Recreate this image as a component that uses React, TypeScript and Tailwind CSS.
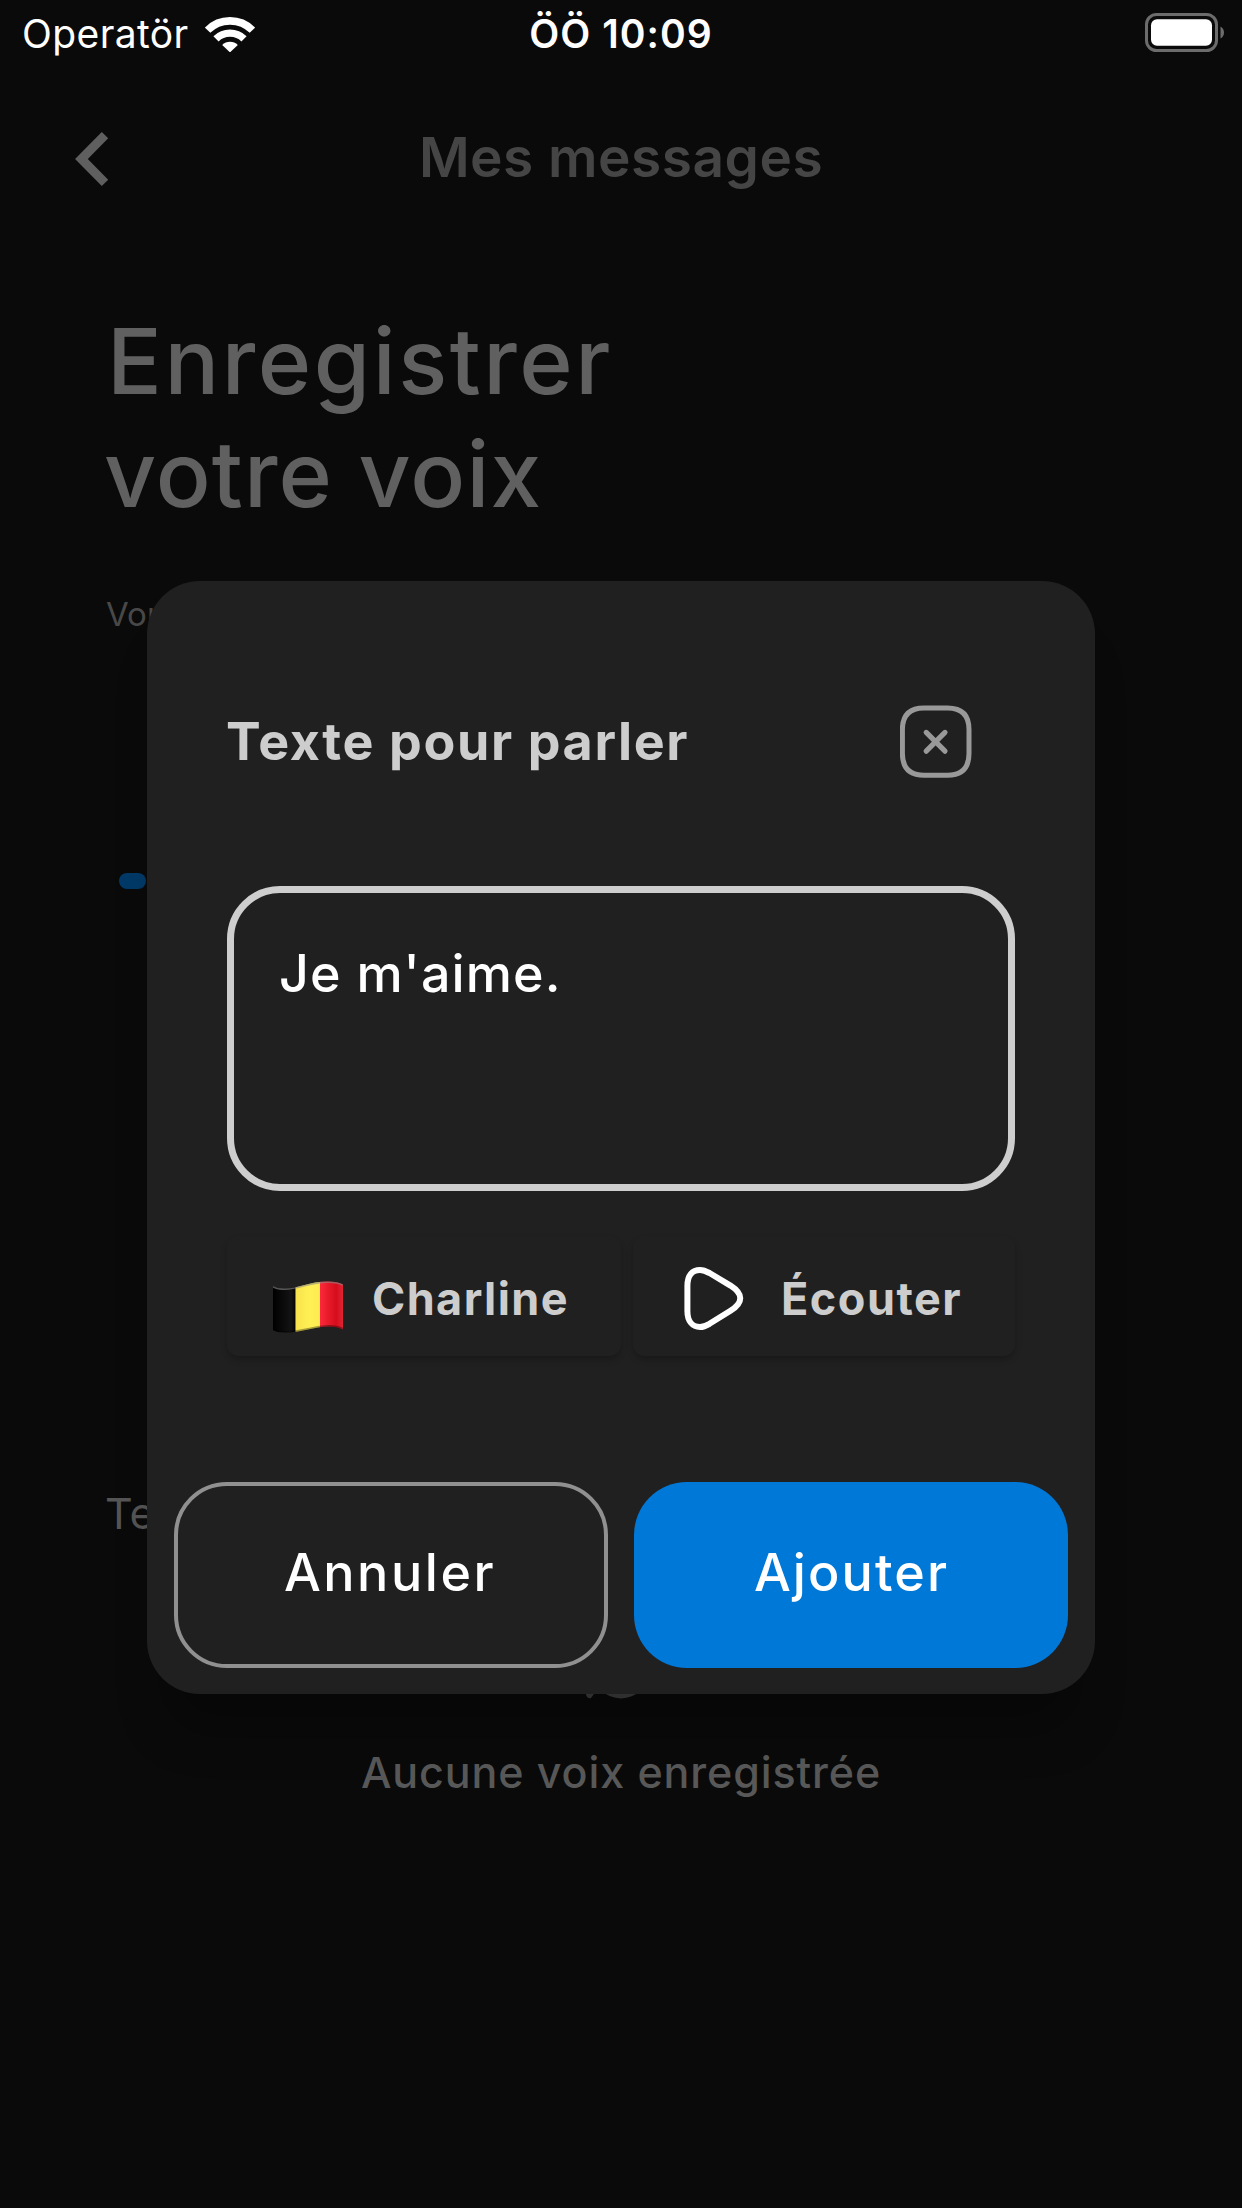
function WifiIcon() {
  return (
    <svg className="h-9 w-[50px]" viewBox="0 0 50 36" fill="none">
      <path d="M2.6 14.2 A31.5 31.5 0 0 1 47.4 14.2" stroke="#fff" strokeWidth="7.6" />
      <path d="M11 22.8 A20 20 0 0 1 39 22.8" stroke="#fff" strokeWidth="7.4" />
      <path d="M17.2 29 A11 11 0 0 1 32.8 29 L25 36.4 Z" fill="#fff" />
    </svg>
  );
}

function BatteryIcon() {
  return (
    <svg className="h-[39px] w-[79px]" viewBox="0 0 79 39" fill="none">
      <rect x="1.5" y="1.5" width="70" height="36" rx="10" stroke="#6c6c6c" strokeWidth="3" />
      <rect x="6" y="6.2" width="61" height="26.5" rx="6" fill="#fff" />
      <path d="M75.5 13.5 Q79 15.5 79 19.5 Q79 23.5 75.5 25.5 Z" fill="#6c6c6c" />
    </svg>
  );
}

function ChevronLeft() {
  return (
    <svg className="h-[54px] w-[34px]" viewBox="0 0 34 54" fill="none">
      <path d="M30 3.2 L6.4 27 L30 50.8" stroke="#5f5f5f" strokeWidth="9" />
    </svg>
  );
}

function SpeechBubble() {
  return (
    <svg className="h-20 w-[120px]" viewBox="0 0 120 80" fill="#414141">
      <circle cx="60" cy="50.5" r="28" />
      <path d="M22 66 L36 70 L30 78 Q27 79 25.5 76 Z" />
    </svg>
  );
}

function CloseIcon() {
  return (
    <svg className="h-[73px] w-[72px]" viewBox="0 0 72 73" fill="none" stroke="#999">
      <path
        d="M24 2.9 H47.6 C62 2.9 69 10 69 24.5 V48.5 C69 63 62 70.2 47.6 70.2 H24 C9.4 70.2 2.4 63 2.4 48.5 V24.5 C2.4 10 9.4 2.9 24 2.9 Z"
        strokeWidth="5"
      />
      <path d="M26.2 27.4 L45 46.2 M45 27.4 L26.2 46.2" strokeWidth="5.2" strokeLinecap="round" />
    </svg>
  );
}

function BelgianFlag() {
  return (
    <svg className="mt-[22px] h-[52px] w-[70px]" viewBox="0 0 70 52">
      <defs>
        <clipPath id="wave">
          <path d="M0 5 Q4 7.5 12 7.5 C26 7.5 36 .5 55 .5 Q65 .5 70 3.5 V48.5 Q64 45.5 56 45.5 C40 45.5 30 51.5 13 51.5 Q3 51.5 0 49 Z" />
        </clipPath>
        <linearGradient id="black" x1="0" x2="1">
          <stop offset="0" stopColor="#000" />
          <stop offset=".8" stopColor="#131313" />
          <stop offset="1" stopColor="#040404" />
        </linearGradient>
        <linearGradient id="yellow" x1="0" x2="1">
          <stop offset="0" stopColor="#f8e24c" />
          <stop offset=".6" stopColor="#fff055" />
          <stop offset="1" stopColor="#fdea50" />
        </linearGradient>
        <linearGradient id="red" x1="0" x2="1">
          <stop offset="0" stopColor="#fb2a3a" />
          <stop offset=".7" stopColor="#d60c1c" />
          <stop offset="1" stopColor="#e02434" />
        </linearGradient>
      </defs>
      <g clipPath="url(#wave)">
        <rect width="22.5" height="52" fill="url(#black)" />
        <rect x="22.5" width="24.5" height="52" fill="url(#yellow)" />
        <rect x="47" width="23" height="52" fill="url(#red)" />
        <path d="M0 5 Q4 7.5 12 7.5 C26 7.5 36 .5 55 .5 Q65 .5 70 3.5" fill="none" stroke="#888" strokeOpacity=".6" strokeWidth="3" />
        <path d="M70 48.5 Q64 45.5 56 45.5 C40 45.5 30 51.5 13 51.5 Q3 51.5 0 49" fill="none" stroke="#000" strokeOpacity=".35" strokeWidth="3" />
      </g>
    </svg>
  );
}

function PlayIcon() {
  return (
    <svg className="mt-1 h-[63px] w-[60px]" viewBox="0 0 60 63" fill="none" stroke="#fff" strokeWidth="6" strokeLinejoin="round">
      <path d="M3.4 19 C3.4 8 8.4 3 16 3 Q20 3 25.5 6 L46.5 18.6 C59.5 27 59.5 35.5 46.5 43.8 L25.5 56.8 Q20 60 16 60 C8.4 60 3.4 54 3.4 44 Z" />
    </svg>
  );
}

function StatusBar() {
  return (
    <div className="grid h-[68px] grid-cols-3 items-center text-[39px] leading-[48px] text-white">
      <div className="flex items-center gap-[16px] pl-[22px]">
        <span className="tracking-[0.4px]">Operatör</span>
        <WifiIcon />
      </div>
      <span className="text-center font-semibold tracking-[1.05px]">ÖÖ 10:09</span>
      <div className="flex justify-end pr-[18px] pb-[4px]">
        <BatteryIcon />
      </div>
    </div>
  );
}

function RecordScreen() {
  return (
    <div className="flex flex-col">
      <StatusBar />
      <header className="grid h-[178px] grid-cols-[1fr_auto_1fr] items-center">
        <button className="justify-self-start pt-1 pl-[75px]">
          <ChevronLeft />
        </button>
        <h2 className="text-[55px] leading-[64px] font-semibold tracking-[0.47px] text-[#454545]">Mes messages</h2>
      </header>
      <h1 className="mt-[59px] flex flex-col pl-[104px] text-[91px] leading-[113px] font-medium text-[#606060]">
        <span className="ml-[3px] tracking-[2.55px]">Enregistrer</span>
        <span className="tracking-[1.15px]">votre voix</span>
      </h1>
      <p className="mt-[63px] pl-[106px] text-[33px] leading-[40px] text-[#484848]">Vous</p>
      <div className="mt-[239px] ml-[119px] h-4 w-[27px] rounded-full bg-[#003a68]" />
      <p className="mt-[598px] pl-[105px] text-[43px] leading-[52px] text-[#555]">Textes</p>
      <div className="mt-[81px] flex flex-col items-center">
        <SpeechBubble />
        <p className="mt-[46px] text-[43px] leading-[52px] font-medium tracking-[0.9px] text-[#585858]">
          Aucune voix enregistrée
        </p>
      </div>
    </div>
  );
}

function SpeechDialog() {
  return (
    <section className="flex w-[948px] flex-col rounded-[53px] bg-[#202020] pt-[124px] pb-[26px] shadow-[0_54px_50px_-20px_rgba(0,0,0,0.3)]">
      <div className="flex h-[73px] items-center justify-between pr-[123px] pl-[79px]">
        <h3 className="text-[52px] leading-[64px] font-bold tracking-[1.62px] text-[#cdcdcd]">Texte pour parler</h3>
        <CloseIcon />
      </div>
      <div className="mx-[80px] mt-[108px] h-[305px] rounded-[53px] border-[7px] border-[#cecece] pt-[49px] pl-[45px] text-[52px] leading-[64px] font-medium tracking-[1.1px] text-white">
        Je m'aime.
      </div>
      <div className="mx-[80px] mt-[45px] flex h-[120px] gap-[12px] text-[45px] leading-[60px] font-bold text-[#cdcdcd]">
        <button className="flex w-[394px] items-center rounded-xl pl-[46px] shadow-[0_4px_6px_rgba(0,0,0,0.22)]">
          <BelgianFlag />
          <span className="mt-[5px] ml-[29px] tracking-[1.4px]">Charline</span>
        </button>
        <button className="flex w-[382px] items-center rounded-xl pl-[51px] shadow-[0_4px_6px_rgba(0,0,0,0.22)]">
          <PlayIcon />
          <span className="mt-[5px] ml-[37px] tracking-[1.5px]">Écouter</span>
        </button>
      </div>
      <div className="mt-[126px] flex gap-[26px] px-[27px] text-[52px] leading-[64px] font-medium text-white">
        <button className="h-[186px] w-[434px] rounded-[53px] border-4 border-[#909090] pr-[2px] pb-1 tracking-[2.54px]">
          Annuler
        </button>
        <button className="h-[186px] w-[434px] rounded-[53px] bg-[#0078d7] pb-1 pl-[1px] tracking-[2.1px]">
          Ajouter
        </button>
      </div>
    </section>
  );
}

export default function App() {
  return (
    <main className="relative h-[2208px] w-[1242px] overflow-hidden bg-[#0a0a0a] font-['Inter',sans-serif]">
      <RecordScreen />
      <div className="absolute inset-0 flex items-start justify-center pt-[581px]">
        <SpeechDialog />
      </div>
    </main>
  );
}
